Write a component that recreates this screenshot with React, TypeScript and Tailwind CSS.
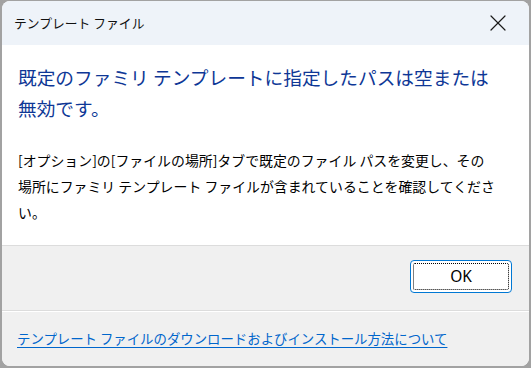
import { X } from 'lucide-react'

const jp = { fontFamily: '"Noto Sans CJK JP", "Noto Sans", sans-serif' }

function App() {
  return (
    <div className="w-[531px] h-[368px] bg-[#a2a2a2] pt-[1px] px-[2px] pb-[2px]" style={jp}>
      <div className="flex flex-col h-full rounded-[8px] overflow-hidden bg-white">
        {/* title bar */}
        <div className="h-[44px] shrink-0 bg-[#eef3f9] flex items-center justify-between pl-[12px] pr-[17px]">
          <span className="text-[12.8px] text-[#111111]">テンプレート ファイル</span>
          <X size={28} strokeWidth={1.05} className="text-[#1a1a1a]" />
        </div>

        {/* content */}
        <div className="h-[200px] shrink-0 bg-white pt-[16px] pl-[16px] whitespace-nowrap">
          <div className="text-[18.7px] leading-[31px] text-[#0e3796]">
            既定のファミリ テンプレートに指定したパスは空または
            <br />
            無効です。
          </div>
          <div className="mt-[24px] text-[13.9px] leading-[26px] text-black">
            [オプション]の[ファイルの場所]タブで既定のファイル パスを変更し、その
            <br />
            場所にファミリ テンプレート ファイルが含まれていることを確認してくださ
            <br />
            い。
          </div>
        </div>

        {/* buttons */}
        <div className="h-[65px] shrink-0 bg-[#f0f0f0] border-t border-[#dcdcdc] flex justify-end items-start pt-[14px] pr-[17px]">
          <button className="relative w-[102px] h-[33px] bg-white border border-[#0078d4] rounded-[4px] text-[15.5px] text-black" style={{ fontFamily: '"Noto Sans", sans-serif' }}>
            <span className="absolute inset-[2px] border border-dotted border-black rounded-[2px]" />
            OK
          </button>
        </div>

        {/* footer */}
        <div className="flex-1 bg-[#f0f0f0] border-t border-[#dcdcdc] shadow-[inset_0_1px_0_#ffffff] flex items-center pl-[15px] pb-[1px]">
          <a className="text-[13.4px] text-[#0066cc] underline underline-offset-[3px] cursor-pointer">
            テンプレート ファイルのダウンロードおよびインストール方法について
          </a>
        </div>
      </div>
    </div>
  )
}

export default App
